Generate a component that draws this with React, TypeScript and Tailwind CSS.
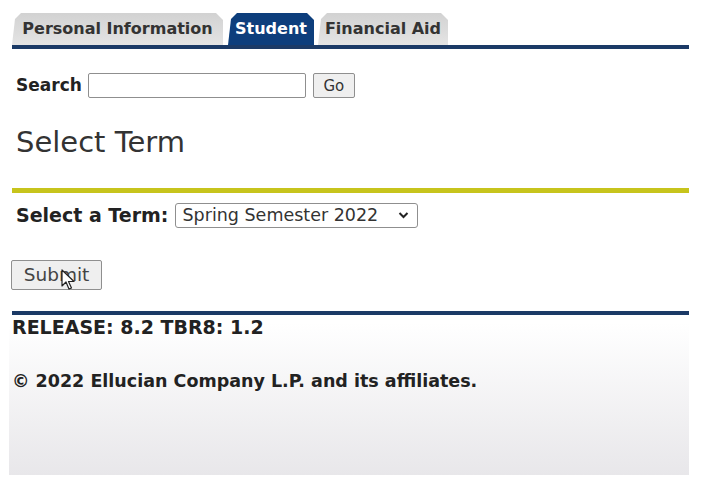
import React from 'react'

const font = "font-['DejaVu_Sans',Verdana,sans-serif]"

function Tab({ label, width, active }: { label: string; width: string; active?: boolean }) {
  return (
    <div
      className={
        `${width} h-[32px] flex items-center justify-center text-[16px] font-bold [clip-path:polygon(0_100%,3px_6px,9px_0,calc(100%-7px)_0,100%_7px,100%_100%)] ` +
        (active
          ? 'bg-[#0d3e7c] text-white'
          : 'bg-gradient-to-b from-[#d2d2d2] to-[#e4e4e4] text-[#333]')
      }
    >
      {label}
    </div>
  )
}

function Cursor() {
  return (
    <svg className="absolute left-[61px] top-[269px]" width="14" height="22" viewBox="0 0 14 22">
      <path d="M1 1 L1 17 L5 13 L8 20 L10.5 19 L7.5 12.5 L13 12.5 Z" fill="#fff" stroke="#222" strokeWidth="1.2" strokeLinejoin="round" />
    </svg>
  )
}

export default function App() {
  return (
    <div className={`relative w-[704px] h-[491px] bg-white overflow-hidden ${font}`}>
      <div className="ml-[9px] w-[680px] h-[475px] bg-gradient-to-b from-white via-white via-[68%] to-[#e8e7ea] pl-[3px]">
        {/* tabs */}
        <div className="pt-[13px] flex items-end">
          <Tab label="Personal Information" width="w-[211px]" />
          <div className="w-[5px]" />
          <Tab label="Student" width="w-[86px]" active />
          <div className="w-[4px]" />
          <Tab label="Financial Aid" width="w-[130px]" />
        </div>
        <div className="h-[4px] bg-[#1b3a66]" />

        {/* search */}
        <div className="mt-[24px] flex items-center pl-[4px]">
          <span className="text-[17px] font-bold text-[#222]">Search</span>
          <input className="ml-[6px] w-[218px] h-[25px] border border-[#8f8f8f] rounded-[2px] bg-white" />
          <button className="ml-[7px] w-[42px] h-[25px] border border-[#8f8f8f] rounded-[2px] bg-[#efefef] text-[15px] text-[#333]">
            Go
          </button>
        </div>

        <h1 className="mt-[26px] pl-[4px] text-[29px] leading-[34px] text-[#333]">Select Term</h1>

        <div className="mt-[29px] h-[5px] bg-[#c7c41c]" />

        <div className="mt-[10px] flex items-center pl-[4px]">
          <span className="text-[19px] leading-[22px] font-bold text-[#222]">Select a Term:</span>
          <div className="ml-[7px] w-[243px] h-[25px] border border-[#8f8f8f] rounded-[3px] bg-white flex items-center justify-between pl-[6px] pr-[8px] text-[17.5px] text-[#333]">
            <span>Spring Semester 2022</span>
            <svg width="11" height="8" viewBox="0 0 11 8">
              <path d="M1.5 2 L5.5 6 L9.5 2" fill="none" stroke="#222" strokeWidth="2" />
            </svg>
          </div>
        </div>

        <button className="mt-[32px] -ml-[1px] w-[91px] h-[30px] border border-[#8f8f8f] rounded-[2px] bg-[#efefef] text-[18.5px] text-[#444]">
          Submit
        </button>

        <div className="mt-[21px] h-[4px] bg-[#1b3a66]" />
        <div className="mt-[1px] text-[19px] leading-[22px] font-bold text-[#222]">RELEASE: 8.2 TBR8: 1.2</div>
        <div className="mt-[33px] text-[17.5px] leading-[20px] font-bold text-[#222]">© 2022 Ellucian Company L.P. and its affiliates.</div>
      </div>
      <Cursor />
    </div>
  )
}
